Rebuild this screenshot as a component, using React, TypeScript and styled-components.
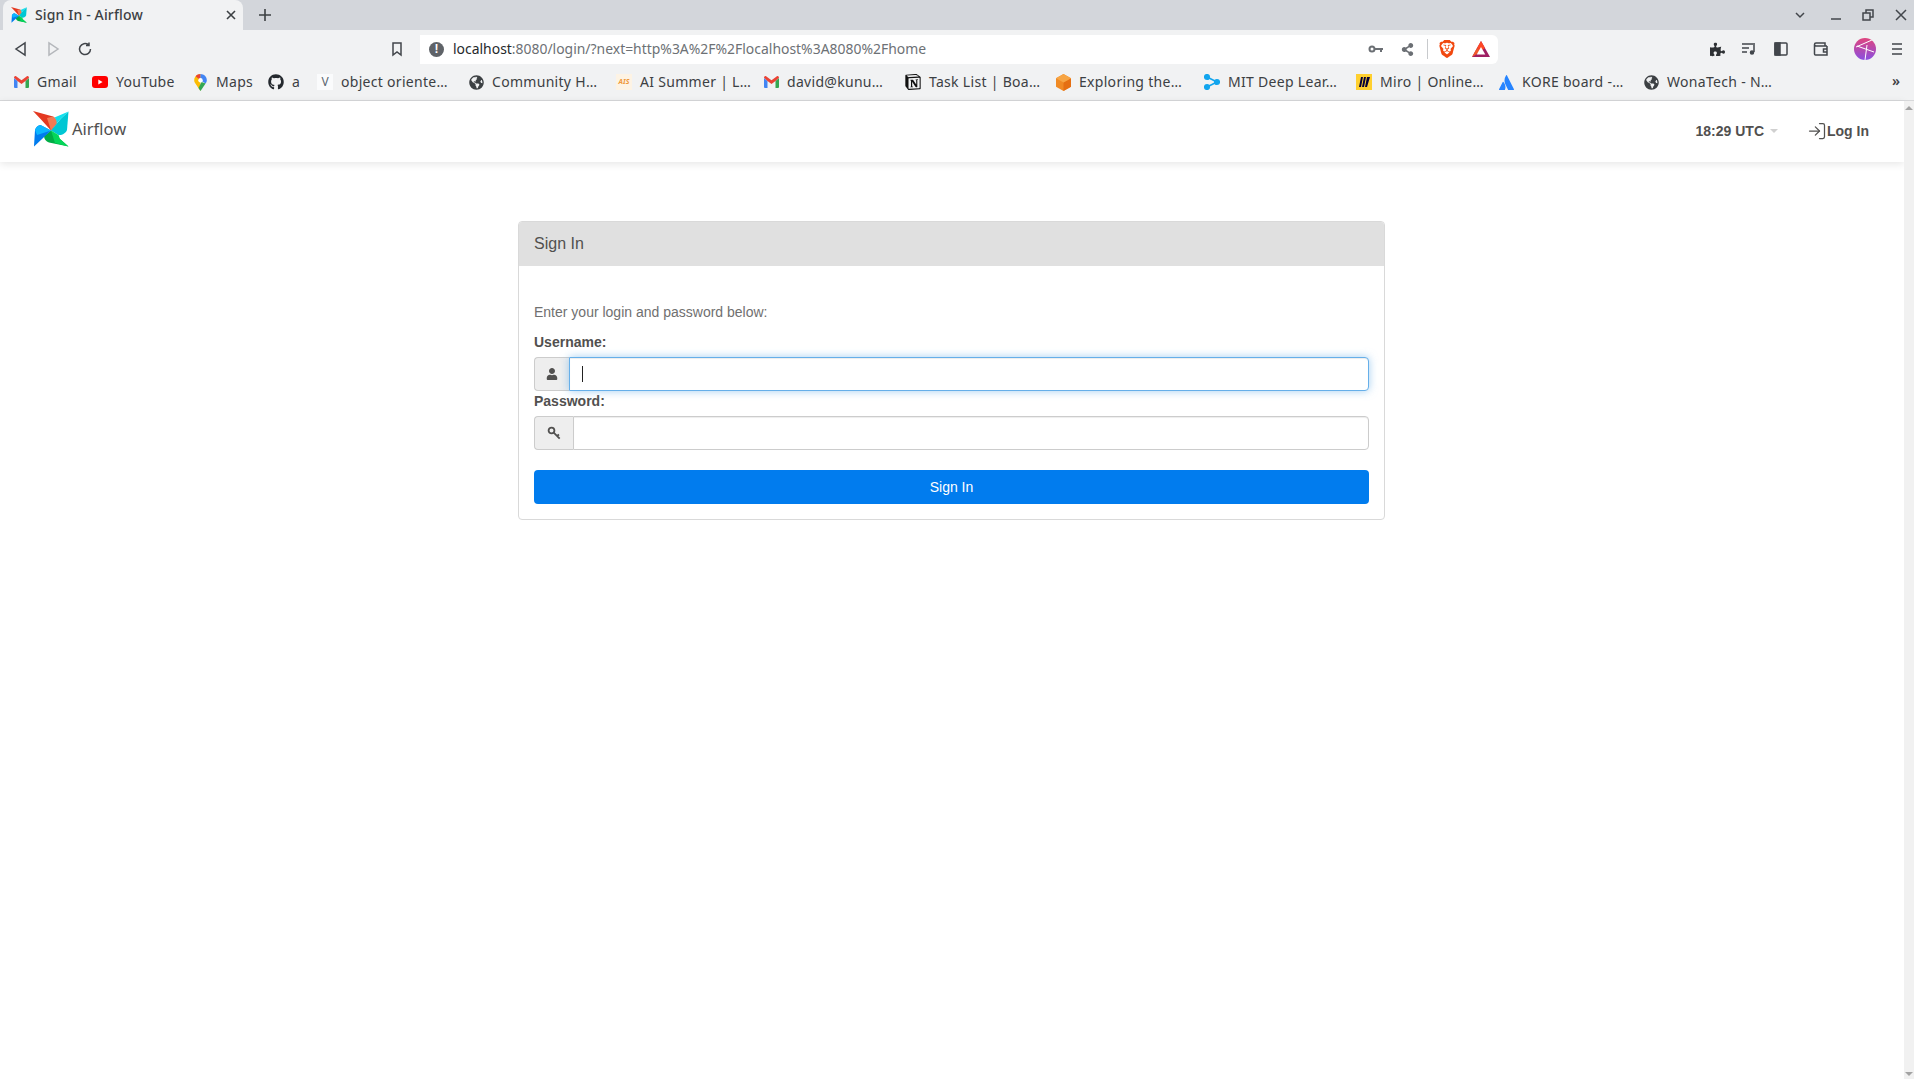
import React from 'react';
import styled, { createGlobalStyle } from 'styled-components';
import { FaGithub, FaGlobeAmericas, FaPuzzlePiece, FaShareAlt, FaUser } from 'react-icons/fa';
import { SiAtlassian, SiBrave, SiNotion } from 'react-icons/si';
import { LogIn } from 'lucide-react';

const GlobalStyle = createGlobalStyle`
  html, body {
    margin: 0;
    padding: 0;
    height: 100%;
    overflow: hidden;
    background: #fff;
  }
  * {
    box-sizing: border-box;
  }
`;

const Window = styled.div`
  width: 1914px;
  height: 1079px;
  display: flex;
  flex-direction: column;
  font-family: 'Liberation Sans', Arial, sans-serif;
`;

/* browser chrome */
const TabStrip = styled.div`
  height: 30px;
  flex: none;
  display: flex;
  align-items: flex-end;
  padding-left: 3px;
  background: #d3d6db;
`;

const Tab = styled.div`
  width: 240px;
  height: 30px;
  display: flex;
  align-items: center;
  padding: 0 7px 0 8px;
  background: #f1f2f3;
  border-radius: 8px 8px 0 0;
  font-family: 'Noto Sans', sans-serif;
  font-size: 14px;
  font-weight: 500;
  letter-spacing: 0.15px;
  color: #3c4043;
`;

const TabTitle = styled.span`
  flex: 1;
  margin-left: 8px;
  padding-bottom: 2px;
  white-space: nowrap;
`;

const TabClose = styled.svg`
  width: 10px;
  height: 10px;
  stroke: #3c4043;
  stroke-width: 1.6;
  fill: none;
`;

const NewTab = styled.svg`
  width: 14px;
  height: 14px;
  margin: 0 0 8px 15px;
  stroke: #3c4043;
  stroke-width: 1.6;
  fill: none;
`;

const WindowButtons = styled.div`
  margin-left: auto;
  height: 30px;
  display: flex;
  align-items: center;
`;

const WindowButton = styled.div<{ $w: number }>`
  width: ${p => p.$w}px;
  display: flex;
  justify-content: center;
  svg {
    width: 12px;
    height: 12px;
    stroke: #42464b;
    stroke-width: 1.5;
    fill: none;
  }
`;

const Toolbar = styled.div`
  height: 38px;
  flex: none;
  display: flex;
  align-items: flex-start;
  padding: 5px 1px 0 5px;
  background: #f1f2f3;
`;

const ToolButton = styled.div<{ $ml?: number; $dim?: boolean }>`
  width: 32px;
  height: 28px;
  flex: none;
  margin-left: ${p => p.$ml ?? 0}px;
  display: flex;
  align-items: center;
  justify-content: center;
  color: ${p => (p.$dim ? '#b4b7bb' : '#42464b')};
  svg.line {
    width: 16px;
    height: 16px;
    stroke: currentColor;
    stroke-width: 1.5;
    fill: none;
  }
`;

const Omnibox = styled.div`
  width: 1078px;
  height: 29px;
  margin-left: 7px;
  flex: none;
  display: flex;
  align-items: center;
  padding: 0 8px 1px 9px;
  background: #fff;
  border-radius: 0 6px 6px 0;
`;

const InfoDot = styled.div`
  width: 15px;
  height: 15px;
  border-radius: 50%;
  background: #5f6368;
  color: #fff;
  font-size: 12px;
  font-weight: 700;
  line-height: 15px;
  text-align: center;
  flex: none;
`;

const Url = styled.div`
  margin-left: 9px;
  padding-bottom: 2px;
  flex: 1;
  font-family: 'Noto Sans', sans-serif;
  font-size: 13.93px;
  color: #6d7175;
  white-space: nowrap;
  b {
    font-weight: 400;
    color: #25282b;
  }
`;

const OmniIcon = styled.div<{ $ml: number }>`
  margin-left: ${p => p.$ml}px;
  display: flex;
  align-items: center;
  color: #6b6f74;
  flex: none;
`;

const OmniDivider = styled.div`
  width: 1px;
  height: 20px;
  margin-left: 13px;
  background: #c8cacd;
  flex: none;
`;

const Avatar = styled.div`
  width: 22px;
  height: 22px;
  border-radius: 50%;
  overflow: hidden;
  display: flex;
`;

const BookmarkBar = styled.div`
  height: 33px;
  flex: none;
  display: flex;
  align-items: flex-start;
  padding: 3px 0 0 5px;
  background: #f1f2f3;
  border-bottom: 1px solid #d7d8da;
`;

const Bookmark = styled.div<{ $w: number }>`
  width: ${p => p.$w}px;
  height: 22px;
  flex: none;
  display: flex;
  align-items: center;
  gap: 8px;
  padding-left: 8px;
  font-family: 'Noto Sans', sans-serif;
  font-size: 14px;
  letter-spacing: 0.3px;
  color: #3c4043;
  white-space: nowrap;
`;

const BookmarkLabel = styled.span`
  padding-bottom: 2px;
`;

const Favicon = styled.div`
  width: 16px;
  height: 16px;
  flex: none;
  display: flex;
  align-items: center;
  justify-content: center;
`;

const AisMark = styled.div`
  width: 16px;
  height: 16px;
  background: #fdf3e4;
  color: #ef9a3c;
  font-size: 7px;
  font-weight: 700;
  font-style: italic;
  line-height: 16px;
  text-align: center;
  letter-spacing: 0;
`;

const VMark = styled.div`
  width: 16px;
  height: 16px;
  background: #fafbfc;
  color: #5b6670;
  font-size: 12px;
  line-height: 15px;
  text-align: center;
  letter-spacing: 0;
`;

const MoreBookmarks = styled.div`
  margin-left: auto;
  margin-right: 14px;
  font-family: 'Noto Sans', sans-serif;
  font-size: 14px;
  font-weight: 600;
  line-height: 20px;
  color: #3c4043;
`;

/* page */
const Viewport = styled.div`
  flex: 1;
  display: flex;
  min-height: 0;
`;

const Page = styled.div`
  flex: 1;
  min-width: 0;
  background: #fff;
`;

const Scrollbar = styled.div`
  width: 10px;
  flex: none;
  display: flex;
  flex-direction: column;
  justify-content: space-between;
  align-items: center;
  padding: 5px 0 3px;
  background: #f1f1f1;
`;

const ScrollArrow = styled.div<{ $down?: boolean }>`
  width: 0;
  height: 0;
  border-left: 4px solid transparent;
  border-right: 4px solid transparent;
  ${p => (p.$down ? 'border-top: 4px solid #a3a3a3;' : 'border-bottom: 4px solid #a3a3a3;')}
`;

const Navbar = styled.nav`
  height: 61px;
  display: flex;
  align-items: flex-start;
  padding: 10px 35px 0 33px;
  background: #fff;
  box-shadow: 0 2px 8px rgba(0, 0, 0, 0.1);
`;

const Brand = styled.div`
  display: flex;
  align-items: center;
  color: #51504f;
  font-family: 'Noto Sans', 'Open Sans', sans-serif;
  font-size: 16.5px;
`;

const BrandName = styled.span`
  margin-left: 3px;
  padding-bottom: 2px;
`;

const NavRight = styled.div`
  margin-left: auto;
  height: 40px;
  display: flex;
  align-items: center;
  font-size: 14px;
  font-weight: 700;
  color: #51504f;
`;

const Caret = styled.span`
  width: 0;
  height: 0;
  margin-left: 6px;
  border-left: 4px solid transparent;
  border-right: 4px solid transparent;
  border-top: 4px solid #d0d0d0;
`;

const LogInLink = styled.a`
  margin-left: 29px;
  display: flex;
  align-items: center;
  color: #51504f;
`;

const LoginCard = styled.section`
  width: 867px;
  margin: 59px 0 0 518px;
  border: 1px solid #d9d9d9;
  border-radius: 4px;
  overflow: hidden;
`;

const CardHeader = styled.header`
  height: 44px;
  display: flex;
  align-items: center;
  padding-left: 15px;
  background: #e0e0e0;
  font-size: 16px;
  color: #51504f;
`;

const CardBody = styled.div`
  padding: 36px 15px 15px;
  font-size: 14px;
  color: #51504f;
`;

const Hint = styled.p`
  margin: 0 0 10px;
  line-height: 20px;
  color: #707070;
`;

const FieldLabel = styled.label`
  display: block;
  line-height: 20px;
  font-weight: 700;
`;

const InputGroup = styled.div`
  position: relative;
  display: flex;
  height: 34px;
  margin-top: 5px;
`;

const Addon = styled.span<{ $w: number }>`
  width: ${p => p.$w}px;
  flex: none;
  display: flex;
  align-items: center;
  justify-content: center;
  background: #eee;
  border: 1px solid #ccc;
  border-right: none;
  border-radius: 4px 0 0 4px;
  color: #51504f;
`;

const TextInput = styled.input<{ $focused?: boolean }>`
  flex: 1;
  min-width: 0;
  padding: 6px 12px;
  font: inherit;
  background: #fff;
  border: 1px solid ${p => (p.$focused ? '#66afe9' : '#ccc')};
  border-radius: 0 4px 4px 0;
  outline: none;
  box-shadow: ${p =>
    p.$focused
      ? 'inset 0 1px 1px rgba(0,0,0,.075), 0 0 8px rgba(102,175,233,.6)'
      : 'inset 0 1px 1px rgba(0,0,0,.075)'};
`;

const TextCaret = styled.span`
  position: absolute;
  left: 48px;
  top: 9px;
  width: 1px;
  height: 16px;
  background: #222;
`;

const SubmitButton = styled.button`
  display: block;
  width: 100%;
  height: 34px;
  margin-top: 20px;
  background: #017cee;
  border: none;
  border-radius: 4px;
  color: #fff;
  font: inherit;
`;

const bookmarkIcons: Record<string, React.ReactNode> = {
  gmail: (
    <svg width="15" height="12" viewBox="0 0 15 12">
      <path d="M0 2v9a1 1 0 0 0 1 1h2.5V5z" fill="#4285f4" />
      <path d="M15 2v9a1 1 0 0 1-1 1h-2.5V5z" fill="#34a853" />
      <path d="M0 1.8C0 .4 1.4-.4 2.4.4L7.5 4.2 12.6.4c1-.8 2.4 0 2.4 1.4L11.5 5 7.5 8 3.5 5z" fill="#ea4335" />
    </svg>
  ),
  youtube: (
    <svg width="16" height="12" viewBox="0 0 16 12">
      <rect width="16" height="12" rx="3" fill="#f00" />
      <path d="M6.3 3.4v5.2L10.6 6z" fill="#fff" />
    </svg>
  ),
  maps: (
    <svg width="13" height="17" viewBox="0 0 13 17">
      <path d="M6.5 0A6.3 6.3 0 0 0 .2 6.3c0 1.2.5 2.4 1.2 3.3l5 7.4z" fill="#fbbc04" />
      <path d="M6.5 0c-2 0-3.700.9-4.900 2.300L6.500 6.300z" fill="#ea4335" />
      <path d="M6.500 0c3.500 0 6.300 2.800 6.300 6.300 0 1.200-.5 2.400-1.200 3.300L6.500 6.300z" fill="#4285f4" />
      <path d="M11.600 9.600 6.500 17l-2-3 3-6z" fill="#34a853" />
      <circle cx="6.500" cy="6.300" r="2.200" fill="#fff" />
    </svg>
  ),
  cube: (
    <svg width="15" height="17" viewBox="0 0 15 17">
      <path d="M7.500 0 15 4.200v8.600L7.500 17 0 12.800V4.200z" fill="#f08a24" />
      <path d="M7.500 8.500 15 4.200v8.600L7.500 17z" fill="#e56f12" />
      <path d="M7.500 0 15 4.200 7.500 8.500 0 4.200z" fill="#f7a544" />
    </svg>
  ),
  mit: (
    <svg width="16" height="16" viewBox="0 0 16 16" stroke="#12a5ee" strokeWidth="1.6" fill="#12a5ee">
      <path d="M3 3 13 8 3 13" fill="none" />
      <circle cx="3" cy="3" r="2.300" />
      <circle cx="13" cy="8" r="2.300" />
      <circle cx="3" cy="13" r="2.300" />
    </svg>
  ),
  miro: (
    <svg width="16" height="16" viewBox="0 0 16 16">
      <rect width="16" height="16" fill="#ffd02f" />
      <path d="M5 3 3 13h2l2-10zm3 0-2 10h2l2-10zm3 0-2 10h2l3-10z" fill="#050038" />
    </svg>
  ),
};

const bookmarks: { label: string; w: number; icon: React.ReactNode }[] = [
  { label: 'Gmail', w: 79, icon: bookmarkIcons.gmail },
  { label: 'YouTube', w: 100, icon: bookmarkIcons.youtube },
  { label: 'Maps', w: 76, icon: bookmarkIcons.maps },
  { label: 'a', w: 49, icon: <FaGithub size={16} color="#24292e" /> },
  { label: 'object oriente…', w: 151, icon: <VMark>V</VMark> },
  { label: 'Community H…', w: 148, icon: <FaGlobeAmericas size={15} color="#3c4043" /> },
  { label: 'AI Summer | L…', w: 147, icon: <AisMark>AIS</AisMark> },
  { label: 'david@kunu…', w: 142, icon: bookmarkIcons.gmail },
  { label: 'Task List | Boa…', w: 150, icon: <SiNotion size={16} color="#111" /> },
  { label: 'Exploring the…', w: 149, icon: bookmarkIcons.cube },
  { label: 'MIT Deep Lear…', w: 152, icon: bookmarkIcons.mit },
  { label: 'Miro | Online…', w: 142, icon: bookmarkIcons.miro },
  { label: 'KORE board -…', w: 145, icon: <SiAtlassian size={15} color="#2684ff" /> },
  { label: 'WonaTech - N…', w: 140, icon: <FaGlobeAmericas size={15} color="#3c4043" /> },
];

const AirflowLogo: React.FC<{ size: number }> = ({ size }) => (
  <svg width={size} height={size} viewBox="0 0 36 36">
    <path d="M0 0 20 5.500C23 7 24.500 10 23.500 13L18 19.500 8.500 9z" fill="#e43921" />
    <path d="M20 5.500C23 7 24.500 10 23.500 13L18 19.500 14 7z" fill="#f37b54" />
    <path d="M35.500.5 34 19C33 22 29 24.500 25.500 24L18 19.500 28 7.500z" fill="#00c7d4" />
    <path d="M35.500.5 28 7.500 18 19.500 23.500 13C24 10 23 8 21.500 6.500z" fill="#11e1ee" />
    <path d="M35.500 35.500 16 31.500C13 30.500 11 28 11 25L18 19.500 27 28z" fill="#00ad46" />
    <path d="M18 19.500 25.500 24 27 28l8.500 7.500L22 32z" fill="#04d659" />
    <path d="M1 35.500 2 19C3 16 5 14.500 7.500 14L18 19.500 9 28z" fill="#017cee" />
    <path d="M2 19C3 16 5 14.500 7.500 14L18 19.500 4 24z" fill="#0cb6ff" />
  </svg>
);

const App: React.FC = () => (
  <Window>
    <GlobalStyle />
    <TabStrip>
      <Tab>
        <AirflowLogo size={16} />
        <TabTitle>Sign In - Airflow</TabTitle>
        <TabClose viewBox="0 0 10 10"><path d="M1 1l8 8M9 1 1 9" /></TabClose>
      </Tab>
      <NewTab viewBox="0 0 14 14"><path d="M7 1v12M1 7h12" /></NewTab>
      <WindowButtons>
        <WindowButton $w={48}><svg viewBox="0 0 12 12"><path d="M2 4l4 4 4-4" /></svg></WindowButton>
        <WindowButton $w={24}><svg viewBox="0 0 12 12"><path d="M1 10h10" /></svg></WindowButton>
        <WindowButton $w={40}><svg viewBox="0 0 12 12"><path d="M4 4V1h7v7H8M1 4h7v7H1z" /></svg></WindowButton>
        <WindowButton $w={26}><svg viewBox="0 0 12 12"><path d="M1 1l10 10M11 1 1 11" /></svg></WindowButton>
      </WindowButtons>
    </TabStrip>

    <Toolbar>
      <ToolButton><svg className="line" viewBox="0 0 16 16"><path d="M12 2v12L3 8z" /></svg></ToolButton>
      <ToolButton $dim><svg className="line" viewBox="0 0 16 16"><path d="M4 2v12l9-6z" /></svg></ToolButton>
      <ToolButton><svg className="line" viewBox="0 0 16 16"><path d="M13.500 8A5.500 5.500 0 1 1 11.500 3.800M12 1.500v3h-3" /></svg></ToolButton>
      <ToolButton $ml={280}><svg className="line" viewBox="0 0 16 16"><path d="M4 2h8v12l-4-3-4 3z" /></svg></ToolButton>
      <Omnibox>
        <InfoDot>!</InfoDot>
        <Url><b>localhost</b>:8080/login/?next=http%3A%2F%2Flocalhost%3A8080%2Fhome</Url>
        <OmniIcon $ml={0}>
          <svg width="16" height="10" viewBox="0 0 16 10" fill="none" stroke="#6b6f74" strokeWidth="2">
            <circle cx="4" cy="5" r="2.500" />
            <path d="M7 5h8M13 5v3" />
          </svg>
        </OmniIcon>
        <OmniIcon $ml={17}><FaShareAlt size={13} /></OmniIcon>
        <OmniDivider />
        <OmniIcon $ml={10}><SiBrave size={18} color="#f1480f" /></OmniIcon>
        <OmniIcon $ml={16}>
          <svg width="18" height="16" viewBox="0 0 18 16">
            <path d="M9 0 18 16H0z" fill="#9e1f63" />
            <path d="M9 0 13 7 9 10 5 7z" fill="#ff4724" />
            <path d="M0 16 5 7 9 10 5 13z" fill="#f1592a" />
            <path d="M9 6 13.300 13.500H4.700z" fill="#fff" />
          </svg>
        </OmniIcon>
      </Omnibox>
      <ToolButton $ml={203}><FaPuzzlePiece size={15} color="#2e3134" /></ToolButton>
      <ToolButton>
        <svg className="line" viewBox="0 0 16 16"><path d="M1 3h11M1 7h7M1 11h5M13 2v9" /><circle cx="11" cy="11.500" r="1.500" fill="currentColor" /></svg>
      </ToolButton>
      <ToolButton>
        <svg className="line" viewBox="0 0 16 16"><rect x="2" y="2" width="12" height="12" rx="1" /><rect x="2" y="2" width="5" height="12" fill="currentColor" /></svg>
      </ToolButton>
      <ToolButton $ml={8}>
        <svg className="line" viewBox="0 0 16 16"><path d="M14 5H3a1.500 1.500 0 0 1 0-3h9v3M1.500 3.500V13a1 1 0 0 0 1 1H14V5M14 8h-3.500v3H14" /></svg>
      </ToolButton>
      <ToolButton $ml={12}>
        <Avatar>
          <svg width="22" height="22" viewBox="0 0 22 22">
            <defs>
              <linearGradient id="avatarFill" x1="0" y1="0" x2="0" y2="1">
                <stop offset="0" stopColor="#e0457e" />
                <stop offset="1" stopColor="#8a4fe0" />
              </linearGradient>
            </defs>
            <rect width="22" height="22" fill="url(#avatarFill)" />
            <path d="M2 9 18 2M3 8l17 6M13 7l-2 15" stroke="#fff" strokeWidth="1" fill="none" />
          </svg>
        </Avatar>
      </ToolButton>
      <ToolButton>
        <svg className="line" viewBox="0 0 16 16"><path d="M3 3h10M3 8h10M3 13h10" /></svg>
      </ToolButton>
    </Toolbar>

    <BookmarkBar>
      {bookmarks.map(b => (
        <Bookmark key={b.label} $w={b.w}>
          <Favicon>{b.icon}</Favicon>
          <BookmarkLabel>{b.label}</BookmarkLabel>
        </Bookmark>
      ))}
      <MoreBookmarks>»</MoreBookmarks>
    </BookmarkBar>

    <Viewport>
      <Page>
        <Navbar>
          <Brand>
            <AirflowLogo size={36} />
            <BrandName>Airflow</BrandName>
          </Brand>
          <NavRight>
            18:29 UTC
            <Caret />
            <LogInLink>
              <LogIn size={20} strokeWidth={1.5} />
              Log In
            </LogInLink>
          </NavRight>
        </Navbar>

        <LoginCard>
          <CardHeader>Sign In</CardHeader>
          <CardBody>
            <Hint>Enter your login and password below:</Hint>
            <FieldLabel>Username:</FieldLabel>
            <InputGroup>
              <Addon $w={35}><FaUser size={12} /></Addon>
              <TextInput $focused readOnly />
              <TextCaret />
            </InputGroup>
            <FieldLabel>Password:</FieldLabel>
            <InputGroup>
              <Addon $w={39}>
                <svg width="14" height="14" viewBox="0 0 14 14" fill="none" stroke="currentColor" strokeWidth="1.8">
                  <circle cx="4.500" cy="4.500" r="2.900" />
                  <path d="M6.700 6.700l6 6M10 10l2-1.500" />
                </svg>
              </Addon>
              <TextInput type="password" readOnly />
            </InputGroup>
            <SubmitButton>Sign In</SubmitButton>
          </CardBody>
        </LoginCard>
      </Page>
      <Scrollbar>
        <ScrollArrow />
        <ScrollArrow $down />
      </Scrollbar>
    </Viewport>
  </Window>
);

export default App;
